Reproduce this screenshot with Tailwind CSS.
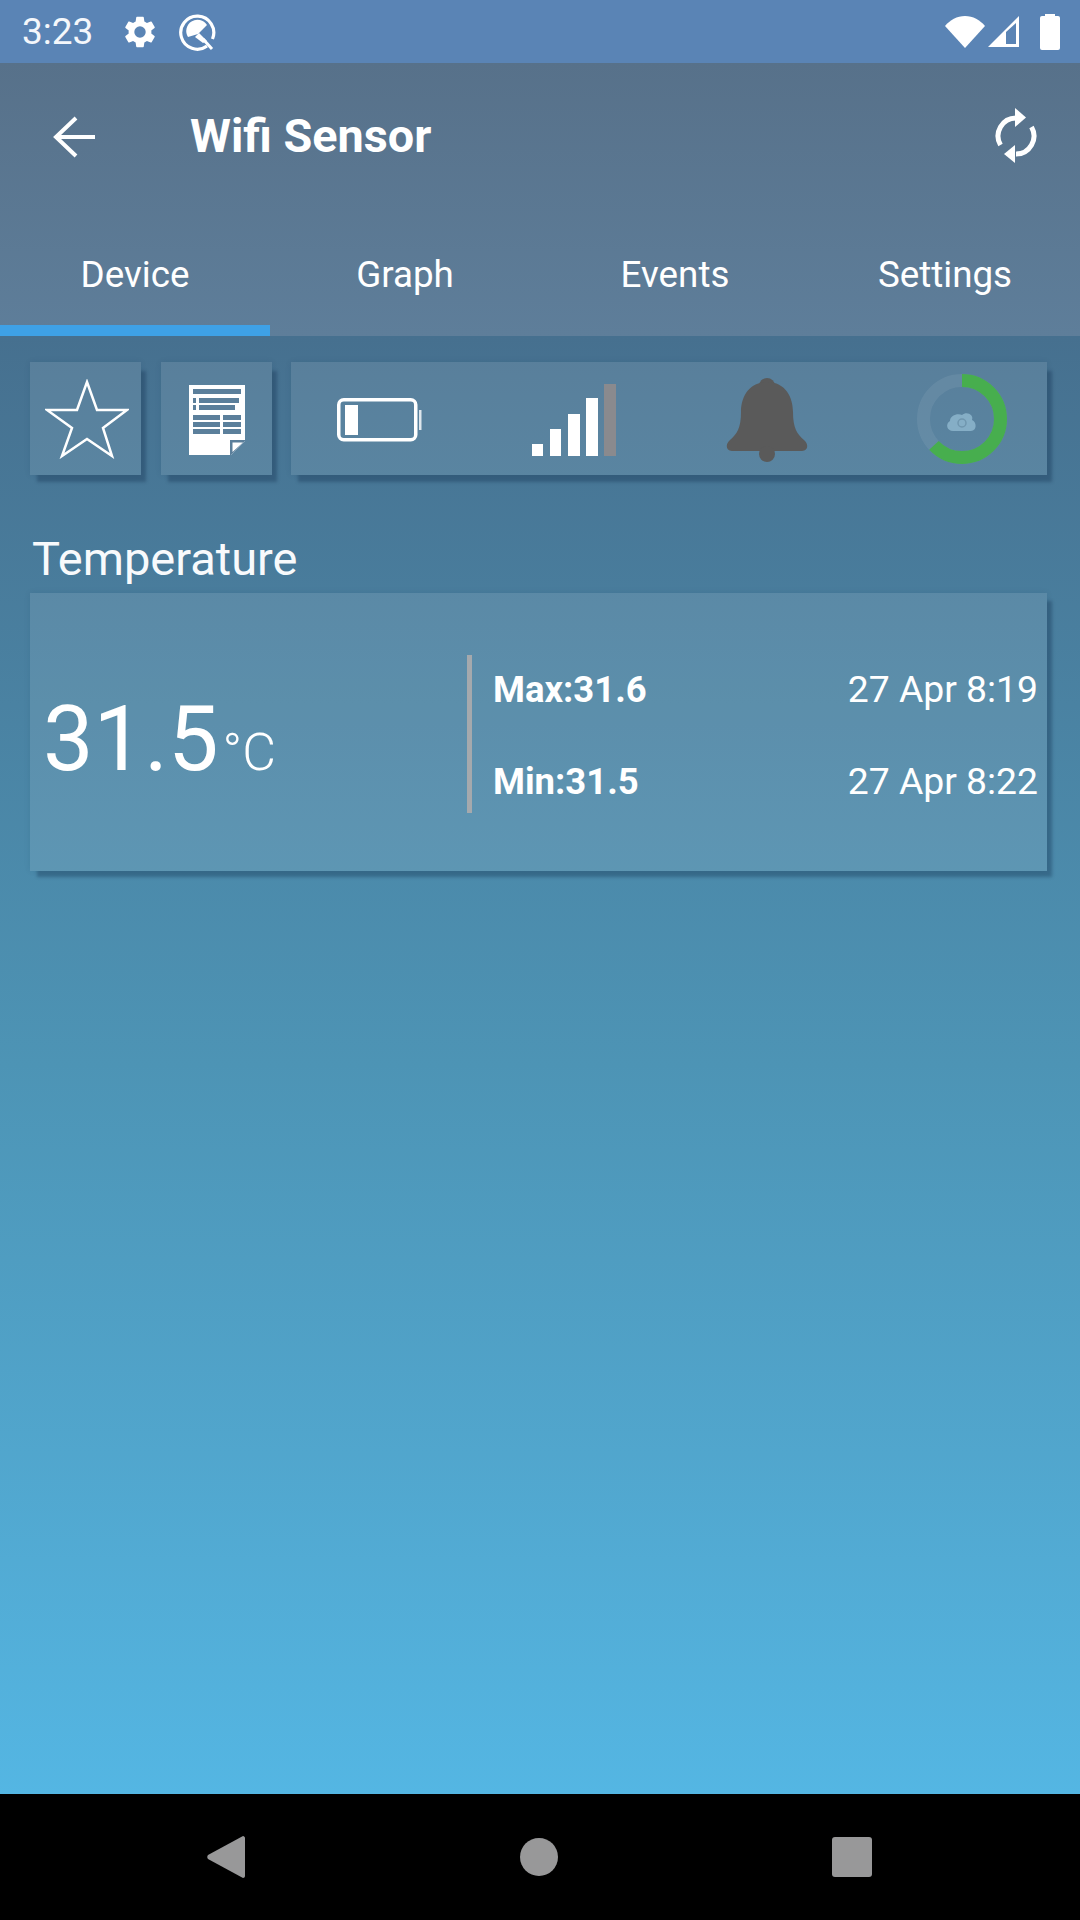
<!DOCTYPE html>
<html lang="en">
<head>
  <meta charset="UTF-8" />
  <title>Wifi Sensor</title>
  <script src="https://cdn.jsdelivr.net/npm/@tailwindcss/browser@4"></script>
</head>
<body class="font-['Roboto',sans-serif] text-white">
  <div class="w-[1080px] h-[1920px] flex flex-col overflow-hidden">

    <!-- status bar -->
    <div class="h-[63px] bg-[#5a84b5] flex items-center pl-[22px] pr-[20px]">
      <span class="text-[37px] leading-none w-[99px] text-[#f4f7fb]">3:23</span>
      <svg class="w-[38px] h-[38px]" viewBox="0 0 24 24" fill="#fff"><path d="M19.14 12.94c.04-.3.06-.61.06-.94 0-.32-.02-.64-.07-.94l2.03-1.58a.49.49 0 0 0 .12-.61l-1.92-3.32a.488.488 0 0 0-.59-.22l-2.39.96c-.5-.38-1.03-.7-1.62-.94l-.36-2.54a.484.484 0 0 0-.48-.41h-3.84c-.24 0-.43.17-.47.41l-.36 2.54c-.59.24-1.13.57-1.62.94l-2.39-.96c-.22-.08-.47 0-.59.22L2.74 8.87c-.12.21-.08.47.12.61l2.03 1.58c-.05.3-.09.63-.09.94s.02.64.07.94l-2.03 1.58a.49.49 0 0 0-.12.61l1.92 3.32c.12.22.37.29.59.22l2.39-.96c.5.38 1.03.7 1.62.94l.36 2.54c.05.24.24.41.48.41h3.84c.24 0 .44-.17.47-.41l.36-2.54c.59-.24 1.13-.56 1.62-.94l2.39.96c.22.08.47 0 .59-.22l1.92-3.32c.12-.22.07-.47-.12-.61l-2.01-1.58zM12 15.6A3.6 3.6 0 1 1 12 8.4a3.6 3.6 0 0 1 0 7.2z"/></svg>
      <svg class="w-[38px] h-[38px] ml-[20px]" viewBox="0 0 38 38" fill="none" stroke="#fff">
        <path d="M28 33 A16.500 16.500 0 1 1 33.500 26" stroke-width="3.200"/>
        <path d="M9 24 A10.500 10.500 0 0 1 28 12 L19 21 Z" fill="#fff" stroke="none"/>
        <path d="M16 24 L20 20 L28 28 L24 30 Z" fill="#fff" stroke="none"/>
        <path d="M24 26 L33 36" stroke-width="3"/>
      </svg>
      <div class="flex-1"></div>
      <svg class="w-[40px] h-[33px]" viewBox="0 0 40 33" fill="#fff"><path d="M0 11 C5 5 12 1 20 1 S35 5 40 11 L20 33 Z"/></svg>
      <svg class="w-[34px] h-[33px] ml-[2px]" viewBox="0 0 34 33"><path d="M1 32 L32 1 V32 Z" fill="#fff"/><path d="M19 17 L19 29 L29 29 L29 8 Z" fill="#5a84b5"/></svg>
      <div class="ml-[19px] relative w-[20px] h-[34px] bg-white rounded-[2px] mt-[2px]">
        <div class="absolute -top-[2px] left-[5px] w-[10px] h-[3px] bg-white"></div>
      </div>
    </div>

    <!-- app bar + tabs -->
    <div class="h-[273px] bg-linear-to-b from-[#57718a] to-[#5e7e9a] flex flex-col">
      <div class="h-[147px] flex items-center">
        <svg class="w-[42px] h-[42px] ml-[53px]" viewBox="0 0 42 42" fill="none" stroke="#fff" stroke-width="4"><path d="M42 21 H3 M23 2 L3 21 L23 40"/></svg>
        <span class="text-[46.800px] font-bold ml-[95px] leading-none">Wifi Sensor</span>
        <div class="flex-1"></div>
        <svg class="w-[44px] h-[58px] mr-[42px]" viewBox="0 0 44 58" fill="#fff">
          <path d="M6.500 37 A18 18 0 0 1 22 10" fill="none" stroke="#fff" stroke-width="5"/>
          <path d="M21 0 L32 9.500 L21 19 Z"/>
          <path d="M37.500 19 A18 18 0 0 1 22 46" fill="none" stroke="#fff" stroke-width="5"/>
          <path d="M21 37 L10 46 L21 55 Z"/>
        </svg>
      </div>
      <div class="grid grid-cols-4 flex-1">
        <div class="flex flex-col">
          <div class="flex-1 text-center text-[36.750px] leading-none pt-[47px]">Device</div>
          <div class="h-[11px] bg-[#3ea1e6]"></div>
        </div>
        <div class="text-center text-[36.750px] leading-none pt-[47px]">Graph</div>
        <div class="text-center text-[36.750px] leading-none pt-[47px]">Events</div>
        <div class="text-center text-[36.750px] leading-none pt-[47px]">Settings</div>
      </div>
    </div>

    <!-- content -->
    <div class="flex-1 bg-linear-to-b from-[#46708f] via-[#4d94b5] to-[#54b6e3] pl-[30px] pr-[33px] pt-[26px]">
      <div class="flex h-[113px]">
        <div class="w-[111px] bg-white/10 shadow-[6px_8px_3px_-1px_rgba(20,50,80,0.35),0_0_6px_rgba(20,50,80,0.1)] flex items-center justify-center">
          <svg class="w-[84px] h-[80px] ml-[3px]" viewBox="0 0 84 80" fill="none" stroke="#fff" stroke-width="2.500"><path d="M42 3 L52 31 L82 31 L58 49 L67 77 L42 60 L17 77 L27 49 L2 31 L32 31 Z"/></svg>
        </div>
        <div class="w-[112px] ml-[20px] bg-white/10 shadow-[6px_8px_3px_-1px_rgba(20,50,80,0.35),0_0_6px_rgba(20,50,80,0.1)] flex items-center justify-center">
          <svg class="w-[56px] h-[70px] ml-[2px] mt-[2px]" viewBox="0 0 56 70" fill="#fff">
            <path d="M0 0 H56 V56 L42 70 H0 Z"/>
            <path d="M41 70 V55 H56 V56 L42 70 Z" fill="#5b7f9b"/>
            <path d="M43.500 67 V57.500 H54 Z" fill="#fff"/>
            <g fill="#5b7f9b">
              <rect x="4" y="4" width="48" height="5"/>
              <rect x="4" y="13" width="3" height="5"/>
              <rect x="10" y="13" width="40" height="5"/>
              <rect x="4" y="20" width="3" height="5"/>
              <rect x="10" y="20" width="36" height="5"/>
              <rect x="4" y="30" width="27" height="5"/><rect x="34" y="30" width="18" height="5"/>
              <rect x="4" y="37" width="27" height="5"/><rect x="34" y="37" width="18" height="5"/>
              <rect x="4" y="44" width="27" height="5"/><rect x="34" y="44" width="18" height="5"/>
            </g>
          </svg>
        </div>
        <div class="w-[758px] ml-[19px] bg-white/10 shadow-[6px_8px_3px_-1px_rgba(20,50,80,0.35),0_0_6px_rgba(20,50,80,0.1)] grid grid-cols-4">
          <div class="flex items-center justify-center">
            <svg class="w-[85px] h-[44px] ml-[-13px] mt-[2px]" viewBox="0 0 85 44" fill="none">
              <rect x="1.750" y="1.750" width="77" height="40" rx="5" stroke="#fff" stroke-width="3.500"/>
              <rect x="8" y="7" width="13" height="30" fill="#fff"/>
              <rect x="82" y="12" width="2.500" height="20" fill="#fff" opacity=".8"/>
            </svg>
          </div>
          <div class="flex items-center justify-center">
            <svg class="w-[84px] h-[72px] ml-[-2px] mt-[3px]" viewBox="0 0 84 72">
              <rect x="0" y="60" width="11" height="12" fill="#fff"/>
              <rect x="18" y="45" width="11" height="27" fill="#fff"/>
              <rect x="36" y="30" width="12" height="42" fill="#fff"/>
              <rect x="54" y="14" width="12" height="58" fill="#fff"/>
              <rect x="72" y="0" width="12" height="72" fill="#8a8a8e"/>
            </svg>
          </div>
          <div class="flex items-center justify-center">
            <svg class="w-[82px] h-[84px] ml-[6px] mt-[2px]" viewBox="0 0 82 84" fill="#5a5a5a">
              <circle cx="41" cy="8" r="8"/>
              <path d="M41 4 C22 4 15 20 15 34 C15 50 11 56 4 62 C-1 66 0 73 6 73 H76 C82 73 83 66 78 62 C71 56 67 50 67 34 C67 20 60 4 41 4 Z"/>
              <circle cx="41" cy="76" r="8"/>
            </svg>
          </div>
          <div class="flex items-center justify-center">
            <svg class="w-[90px] h-[90px] ml-[18px]" viewBox="0 0 90 90" fill="none">
              <circle cx="45" cy="45" r="38.500" stroke="#fff" stroke-opacity=".07" stroke-width="13"/>
              <circle cx="45" cy="45" r="38.500" stroke="#47ae4e" stroke-width="13" pathLength="100" stroke-dasharray="63 37" transform="rotate(-90 45 45)"/>
              <path d="M36 57 C30 57 28 50 33 47 C33 41 41 39 45 41 C50 37 57 41 55 46 C60 48 60 57 54 57 Z" fill="#85aec6"/>
              <circle cx="45" cy="49" r="4" stroke="#6f96ae" stroke-width="1.500"/>
            </svg>
          </div>
        </div>
      </div>

      <div class="text-[47px] leading-none mt-[60px] ml-[2px] text-[#f8fafc]">Temperature</div>

      <div class="h-[278px] w-[1017px] mt-[11px] bg-white/10 shadow-[6px_7px_3px_-1px_rgba(20,50,80,0.35),0_0_6px_rgba(20,50,80,0.1)] flex items-center">
        <div class="w-[437px] pl-[13px] pt-[16px] flex items-baseline">
          <span class="text-[90px] leading-none">31.5</span>
          <span class="text-[52px] leading-none font-light ml-[4px]">°C</span>
        </div>
        <div class="w-[5px] h-[158px] bg-[#a5a9ad] mt-[4px]"></div>
        <div class="flex-1 pl-[21px] pr-[9px] flex flex-col gap-[55px] leading-[37px] mt-[6px]">
          <div class="flex justify-between items-baseline"><span class="font-bold text-[36.500px]">Max:31.6</span><span class="text-[37.300px]">27 Apr 8:19</span></div>
          <div class="flex justify-between items-baseline"><span class="font-bold text-[36.500px]">Min:31.5</span><span class="text-[37.300px]">27 Apr 8:22</span></div>
        </div>
      </div>
    </div>

    <!-- nav bar -->
    <div class="h-[126px] bg-black flex items-center justify-between pl-[207px] pr-[208px]">
      <svg class="w-[38px] h-[44px]" viewBox="0 0 38 44" fill="#989899"><path d="M36 1 C37 1 38 2 38 3 V41 C38 42 37 43 36 43 L1 24 C0 23 0 21 1 20 Z"/></svg>
      <div class="w-[38px] h-[38px] rounded-full bg-[#989899]"></div>
      <div class="w-[40px] h-[40px] rounded-[3px] bg-[#989899]"></div>
    </div>
  </div>
</body>
</html>
